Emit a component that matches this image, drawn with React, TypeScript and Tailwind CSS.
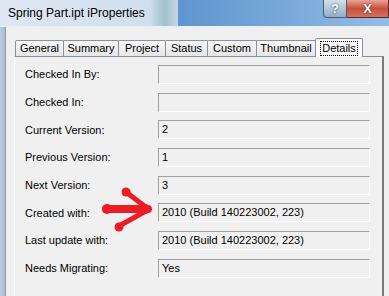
const TABS = [
  { label: 'General', w: 'w-[49px]' },
  { label: 'Summary', w: 'w-[56px]' },
  { label: 'Project', w: 'w-[48px]' },
  { label: 'Status', w: 'w-[43px]' },
  { label: 'Custom', w: 'w-[50px]' },
  { label: 'Thumbnail', w: 'w-[60px]' },
];

const ROWS = [
  { label: 'Checked In By:', value: '' },
  { label: 'Checked In:', value: '' },
  { label: 'Current Version:', value: '2' },
  { label: 'Previous Version:', value: '1' },
  { label: 'Next Version:', value: '3' },
  { label: 'Created with:', value: '2010 (Build 140223002, 223)' },
  { label: 'Last update with:', value: '2010 (Build 140223002, 223)' },
  { label: 'Needs Migrating:', value: 'Yes' },
];

function TitleButtons() {
  return (
    <div className="absolute top-0 right-0 flex">
      <div className="w-[24px] h-[18px] border border-[#4a5a70] border-t-0 rounded-bl-[4px] bg-gradient-to-b from-[#d3e0ee] to-[#93acc9] flex items-center justify-center">
        <span className="text-white font-bold text-[13px] leading-none [text-shadow:0_0_2px_#233]">?</span>
      </div>
      <div className="w-[42px] h-[18px] border border-[#5a2a2a] border-t-0 border-l-0 bg-gradient-to-b from-[#e8a595] via-[#c7503e] to-[#d2735f] flex items-center justify-center">
        <span className="text-white font-bold text-[13px] leading-none [text-shadow:0_0_2px_#411]">X</span>
      </div>
    </div>
  );
}

function Arrow() {
  return (
    <svg className="absolute left-0 top-0 pointer-events-none" width="389" height="296">
      <g stroke="#ec1c24" strokeLinecap="round" fill="none">
        <path d="M106 209 L148 209" strokeWidth="8" />
        <path d="M126 192 L147 208" strokeWidth="5" />
        <path d="M119 226 L146 211" strokeWidth="5" />
      </g>
      <g fill="#ec1c24">
        <circle cx="107" cy="209" r="5" />
        <circle cx="126" cy="192" r="4.5" />
        <circle cx="119" cy="227" r="4.5" />
        <circle cx="145" cy="209" r="5" />
      </g>
    </svg>
  );
}

export default function App() {
  return (
    <div className="relative w-[389px] h-[296px] overflow-hidden bg-[#b7c9de] font-['Liberation_Sans',sans-serif]">
      <div className="relative h-[27px] bg-gradient-to-r from-[#dfe8f3] via-[#cbdbec] to-[#8db4dd] border-b border-[#e6eef6]">
        <div className="absolute top-0 bottom-0 left-[150px] w-[30px] bg-gradient-to-r from-transparent via-[#8fb3be] to-transparent opacity-70" />
        <div className="absolute top-0 bottom-0 left-[178px] right-0 bg-gradient-to-r from-[#5f96cf] via-[#78a8d9] to-[#94bde4]" />
        <span className="absolute left-[8px] top-[6px] text-[12px] leading-[14px] text-black">Spring Part.ipt iProperties</span>
        <TitleButtons />
      </div>

      <div className="flex h-[269px]">
        <div className="w-[6px] bg-gradient-to-r from-[#b9cbe0] to-[#a9bdd6] border-r border-[#8a9bb0]" />
        <div className="flex-1 bg-[#f0f0f0] pl-[8px] pr-[5px] pt-[10px] flex flex-col">
          <div className="flex items-end h-[19px] pl-[1px] text-[11px] leading-none text-black">
            {TABS.map((t) => (
              <div
                key={t.label}
                className={`${t.w} h-[16px] -mr-px border border-b-0 border-[#8c9099] rounded-t-[2px] bg-gradient-to-b from-[#f7f7f7] to-[#e6e6e6] flex items-center justify-center`}
              >
                {t.label}
              </div>
            ))}
            <div className="w-[48px] h-[19px] border border-b-0 border-[#8c9099] rounded-t-[2px] bg-[#fbfbfb] flex items-center justify-center relative z-10 -mb-px">
              <span className="outline outline-1 outline-dotted outline-black px-[1px] leading-[13px]">Details</span>
            </div>
          </div>
          <div className="flex-1 border-t border-l border-r-2 border-t-[#8c9099] border-l-white border-r-[#7a7a7a] bg-[#f0f0f0] pl-[10px] pt-[8px] flex flex-col gap-[8.7px] text-[11px] text-black">
            {ROWS.map((r) => (
              <div key={r.label} className="flex items-center h-[19px]">
                <span className="w-[133px] shrink-0">{r.label}</span>
                <div className="w-[212px] h-[19px] border border-t-[#a0a0a0] border-l-[#a0a0a0] border-b-white border-r-white bg-[#f0f0f0] pl-[3px] flex items-center leading-none">
                  {r.value}
                </div>
              </div>
            ))}
          </div>
        </div>
      </div>
      <Arrow />
    </div>
  );
}
